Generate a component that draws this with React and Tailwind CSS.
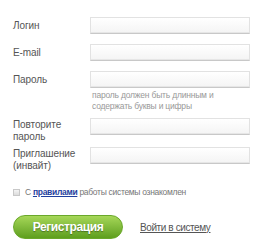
import { useState } from "react";

const inputCls =
  "w-[160px] h-[17px] border border-[#e2e2e2] border-b-[#c8c8c8] bg-gradient-to-b from-white to-[#f4f4f4] shadow-[inset_0_-1px_0_#e6e6e6] outline-none";

function Row({ label, children, tall }) {
  return (
    <div className={`flex ${tall ? "items-start" : "items-center"}`}>
      <label className="w-[77px] text-[10px] tracking-[-0.1px] leading-[12px] text-[#555] pt-[1px]">
        {label}
      </label>
      {children}
    </div>
  );
}

export default function App() {
  const [agree, setAgree] = useState(false);

  return (
    <div className="w-[274px] h-[252px] bg-white pl-[13px] pt-[17px] font-['Liberation_Sans',Arial,sans-serif]">
      <div className="flex flex-col gap-[10px]">
        <Row label="Логин">
          <input className={inputCls} />
        </Row>
        <Row label="E-mail">
          <input className={inputCls} />
        </Row>
        <div>
          <Row label="Пароль">
            <input type="password" className={inputCls} />
          </Row>
          <p className="ml-[79px] mt-[2px] text-[8.5px] tracking-[-0.2px] leading-[11px] text-[#999]">
            пароль должен быть длинным и
            <br />
            содержать буквы и цифры
          </p>
        </div>
      </div>

      <div className="flex flex-col gap-[4px] mt-[6px]">
        <Row label={<>Повторите<br />пароль</>} tall>
          <input type="password" className={inputCls} />
        </Row>
        <Row label={<>Приглашение<br />(инвайт)</>} tall>
          <input className={inputCls} />
        </Row>
      </div>

      {/* Agreement */}
      <div className="flex items-center mt-[14px] text-[8.5px] tracking-[-0.3px] leading-[12px] text-[#777]">
        <button
          onClick={() => setAgree(!agree)}
          className="w-[7px] h-[7px] border border-[#c8c8c8] bg-gradient-to-b from-[#f4f4f4] to-[#dcdcdc] mr-[5px]"
        />
        <span>
          С{" "}
          <a href="#" className="text-[#1f3f9e] font-semibold underline">
            правилами
          </a>{" "}
          работы системы ознакомлен
        </span>
      </div>

      {/* Buttons */}
      <div className="flex items-center mt-[17px]">
        <button className="w-[110px] h-[24px] rounded-full border border-[#6aa82a] bg-gradient-to-b from-[#a6d758] to-[#5e9f1c] text-white text-[12px] tracking-[-0.4px] font-bold [text-shadow:0_1px_1px_rgba(0,0,0,0.35)]">
          Регистрация
        </button>
        <a href="#" className="ml-[17px] text-[10px] tracking-[-0.4px] text-[#555] underline">
          Войти в систему
        </a>
      </div>
    </div>
  );
}
